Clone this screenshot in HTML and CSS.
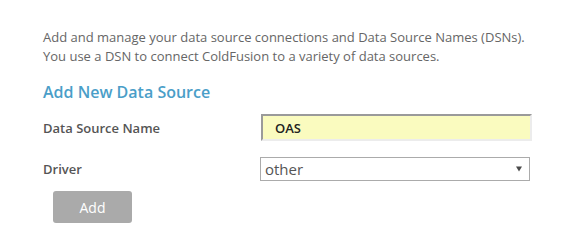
FILE: index.html
```html
<!DOCTYPE html>
<html lang="en">
<head>
<meta charset="utf-8">
<title>Data Sources</title>
<link rel="stylesheet" href="styles.css">
</head>
<body>
<main class="page">
  <p class="intro">Add and manage your data source connections and Data Source Names (DSNs).<br>You use a DSN to connect ColdFusion to a variety of data sources.</p>
  <h2 class="title">Add New Data Source</h2>
  <form class="form">
    <div class="row">
      <label class="label" for="dsn">Data Source Name</label>
      <input class="input" id="dsn" type="text" value="OAS">
    </div>
    <div class="row row-driver">
      <span class="label">Driver</span>
      <div class="select">
        <span class="select-value">other</span>
        <svg class="select-arrow" width="6" height="6" viewBox="0 0 6 6"><path d="M0 0.5 H6 L3 5.5 Z" fill="#4a4a4a"/></svg>
      </div>
    </div>
    <div class="actions">
      <button type="button" class="btn">Add</button>
    </div>
  </form>
</main>
</body>
</html>
```
FILE: styles.css
```css
html, body {
  margin: 0;
  padding: 0;
  background: #ffffff;
}
body {
  font-family: "Open Sans", "Liberation Sans", sans-serif;
  color: #666666;
}
.page {
  padding: 28px 0 0 43px;
}
.intro {
  margin: 0;
  font-size: 13px;
  line-height: 19px;
  color: #666666;
}
.title {
  margin: 15px 0 0 0;
  font-size: 16px;
  line-height: 22px;
  font-weight: 600;
  color: #4a9ec8;
}
.form {
  margin-top: 11px;
}
.row {
  display: flex;
  align-items: center;
}
.row-driver {
  margin-top: 16px;
}
.label {
  width: 217px;
  font-size: 13px;
  font-weight: 600;
  color: #555555;
}
.input {
  box-sizing: border-box;
  margin: 0 0 0 1px;
  width: 271px;
  height: 27px;
  padding: 0 0 0 12px;
  border-style: solid;
  border-width: 2px;
  border-color: #9a9a9a #ececec #ececec #9a9a9a;
  background: #fafbbf;
  font-family: "Open Sans", "Liberation Sans", sans-serif;
  font-size: 13px;
  font-weight: 600;
  color: #222222;
  outline: none;
}
.select {
  box-sizing: border-box;
  width: 270px;
  height: 24px;
  border: 1px solid #ababab;
  background: #ffffff;
  display: flex;
  align-items: center;
  justify-content: space-between;
  padding: 0 7px 0 4px;
}
.select-value {
  font-size: 15px;
  color: #555555;
  line-height: 22px;
}
.select-arrow {
  display: block;
}
.actions {
  margin-top: 10px;
  padding-left: 10px;
}
.btn {
  width: 79px;
  height: 32px;
  border: none;
  border-radius: 3px;
  background: #aaaaaa;
  color: #ffffff;
  font-family: "Open Sans", "Liberation Sans", sans-serif;
  font-size: 14px;
  padding: 0;
}
```
